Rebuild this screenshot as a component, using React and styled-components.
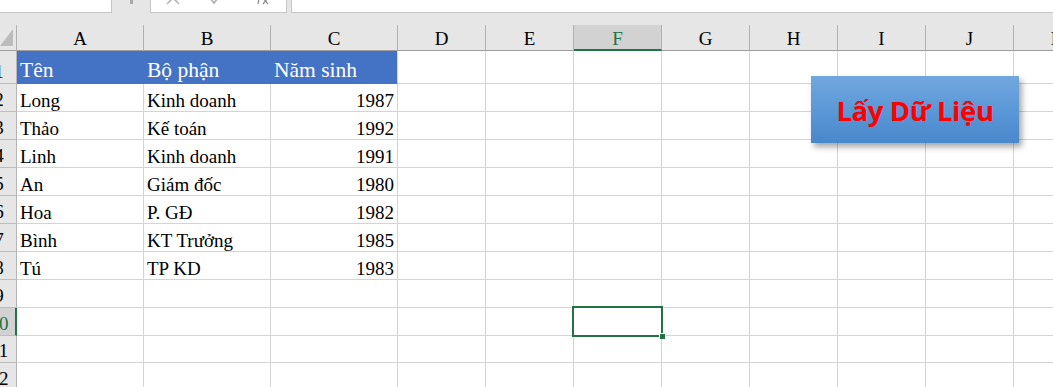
import React from 'react';
import styled, { createGlobalStyle } from 'styled-components';

const GlobalStyle = createGlobalStyle`
  html, body {
    margin: 0;
    padding: 0;
    background: #ffffff;
    overflow: hidden;
  }
  body {
    font-family: "Liberation Serif", "Times New Roman", serif;
  }
`;

const GREEN = '#217346';
const GRID = '#d4d4d4';
const HEAD_BG = '#e6e6e6';
const HEAD_SEL = '#d2d2d2';

const Sheet = styled.div`
  position: relative;
  width: 1053px;
  height: 387px;
  overflow: hidden;
  background: #ffffff;
`;

const FormulaBar = styled.div`
  display: flex;
  height: 13px;
  background: ${HEAD_BG};
`;

const NameBox = styled.div`
  width: 112px;
  height: 13px;
  box-sizing: border-box;
  background: #fff;
  border-right: 1px solid #c6c6c6;
  border-bottom: 1px solid #c6c6c6;
  overflow: hidden;
  font-size: 15px;
  line-height: 15px;
  padding-left: 3px;
  color: #222;
`;

const NameText = styled.div`
  margin-top: -12px;
`;

const Grip = styled.div`
  width: 3px;
  height: 4px;
  margin-left: 18px;
  background: #a8a8a8;
`;

const ButtonsBox = styled.div`
  display: flex;
  align-items: flex-start;
  width: 137px;
  height: 13px;
  margin-left: 17px;
  box-sizing: border-box;
  background: #fff;
  border: 1px solid #c6c6c6;
  border-top: none;
  overflow: hidden;
`;

const BarIcon = styled.svg`
  flex: none;
  margin-left: ${p => p.$ml}px;
  margin-top: -9px;
`;

const FormulaInput = styled.div`
  flex: 1;
  height: 13px;
  margin-left: 4px;
  box-sizing: border-box;
  background: #fff;
  border-left: 1px solid #c6c6c6;
  border-bottom: 1px solid #c6c6c6;
`;

const Gap = styled.div`
  height: 12px;
  background: ${HEAD_BG};
`;

const Grid = styled.div`
  display: grid;
  grid-template-columns: 17px 127px 127px 127px repeat(8, 88px);
  grid-auto-rows: auto;
`;

const ColHead = styled.div`
  height: 26px;
  box-sizing: border-box;
  display: flex;
  align-items: flex-end;
  justify-content: center;
  padding-bottom: ${p => (p.$sel ? 1 : 2)}px;
  background: ${p => (p.$sel ? HEAD_SEL : HEAD_BG)};
  border-right: 1px solid #b1b1b1;
  border-bottom: ${p => (p.$sel ? `2px solid ${GREEN}` : '1px solid #9d9d9d')};
  font-size: 19px;
  line-height: 19px;
  color: ${p => (p.$sel ? GREEN : '#000')};
  overflow: hidden;
  white-space: nowrap;
`;

const Corner = styled.div`
  height: 26px;
  box-sizing: border-box;
  background: ${HEAD_BG};
  border-right: 1px solid #b1b1b1;
  border-bottom: 1px solid #9d9d9d;
`;

const RowHead = styled.div`
  height: ${p => p.$h}px;
  box-sizing: border-box;
  display: flex;
  align-items: flex-end;
  padding-bottom: 2px;
  background: ${p => (p.$sel ? HEAD_SEL : HEAD_BG)};
  border-right: ${p => (p.$sel ? `2px solid ${GREEN}` : '1px solid #b5b5b5')};
  border-bottom: 1px solid #bdbdbd;
  overflow: hidden;
  font-size: 19px;
  line-height: 19px;
  color: ${p => (p.$sel ? GREEN : '#000')};
`;

const RowNum = styled.span`
  flex: none;
  width: 40px;
  margin-left: -21px;
  text-align: center;
`;

const Cell = styled.div`
  position: relative;
  height: ${p => p.$h}px;
  box-sizing: border-box;
  display: flex;
  align-items: flex-end;
  justify-content: ${p => (p.$right ? 'flex-end' : 'flex-start')};
  padding: 0 3px ${p => (p.$head ? 2 : 1)}px 3px;
  background: ${p => (p.$head ? '#4472c4' : '#fff')};
  color: ${p => (p.$head ? '#fff' : '#000')};
  border-right: 1px solid ${p => (p.$head && !p.$last ? '#4472c4' : GRID)};
  border-bottom: 1px solid ${p => (p.$head ? '#4472c4' : GRID)};
  font-size: ${p => (p.$head ? 21.5 : 19)}px;
  line-height: ${p => (p.$head ? 21 : 19)}px;
  white-space: nowrap;
`;

const Selection = styled.div`
  position: absolute;
  left: -2px;
  top: -2px;
  right: -2px;
  bottom: -2px;
  border: 2px solid ${GREEN};
  pointer-events: none;
  z-index: 2;
`;

const FillHandle = styled.div`
  position: absolute;
  right: -4px;
  bottom: -4px;
  width: 5px;
  height: 5px;
  background: ${GREEN};
  border: 1px solid #fff;
  border-right: none;
  border-bottom: none;
`;

const MacroButton = styled.div`
  position: absolute;
  left: 811px;
  top: 76px;
  width: 208px;
  height: 67px;
  display: flex;
  align-items: center;
  justify-content: center;
  padding-top: 2px;
  box-sizing: border-box;
  background: linear-gradient(to bottom, #71a7de 0%, #5b98d8 50%, #4987cb 100%);
  box-shadow: 3px 4px 6px rgba(0, 0, 0, 0.35);
  color: #ff0000;
  font-family: "Open Sans", "Noto Sans", sans-serif;
  font-weight: 700;
  font-size: 27.5px;
  letter-spacing: -0.4px;
  white-space: nowrap;
  z-index: 3;
`;

const columns = ['A', 'B', 'C', 'D', 'E', 'F', 'G', 'H', 'I', 'J', 'K'];

const rows = [
  ['Tên', 'Bộ phận', 'Năm sinh'],
  ['Long', 'Kinh doanh', '1987'],
  ['Thảo', 'Kế toán', '1992'],
  ['Linh', 'Kinh doanh', '1991'],
  ['An', 'Giám đốc', '1980'],
  ['Hoa', 'P. GĐ', '1982'],
  ['Bình', 'KT Trưởng', '1985'],
  ['Tú', 'TP KD', '1983'],
  [],
  [],
  [],
  [],
];

const rowHeight = i => (i === 0 ? 33 : i === 10 ? 27 : 28);

const App = () => {
  return (
    <>
      <GlobalStyle />
      <Sheet>
        <FormulaBar>
          <NameBox>
            <NameText>10</NameText>
          </NameBox>
          <Grip />
          <ButtonsBox>
            <BarIcon $ml={14} width="16" height="14" viewBox="0 0 16 14">
              <path d="M2 1 L14 13 M14 1 L2 13" stroke="#b4b4b4" strokeWidth="1.6" fill="none" />
            </BarIcon>
            <BarIcon $ml={28} width="14" height="14" viewBox="0 0 14 14">
              <path d="M1 7 L5 12 L13 2" stroke="#b4b4b4" strokeWidth="1.8" fill="none" />
            </BarIcon>
            <BarIcon $ml={30} width="16" height="14" viewBox="0 0 16 14">
              <path d="M5 13 C6 8 6 4 9 2 M4 6 L9 6 M10 7 L15 13 M15 7 L10 13" stroke="#8a8a8a" strokeWidth="1.2" fill="none" />
            </BarIcon>
          </ButtonsBox>
          <FormulaInput />
        </FormulaBar>
        <Gap />
        <Grid>
          <Corner>
            <svg width="16" height="25" viewBox="0 0 16 25">
              <polygon points="13,4 13,21 0,21" fill="#bcbcbc" />
            </svg>
          </Corner>
          {columns.map(c => (
            <ColHead key={c} $sel={c === 'F'}>{c}</ColHead>
          ))}
          {rows.map((r, i) => {
            const h = rowHeight(i);
            const rowSel = i === 9;
            return (
              <React.Fragment key={i}>
                <RowHead $h={h} $sel={rowSel}>
                  <RowNum>{i + 1}</RowNum>
                </RowHead>
                {columns.map((c, j) => {
                  const head = i === 0 && j < 3;
                  return (
                    <Cell
                      key={c}
                      $h={h}
                      $head={head}
                      $last={j === 2}
                      $right={j === 2 && i > 0}
                    >
                      {j < 3 ? r[j] : null}
                      {rowSel && c === 'F' && (
                        <Selection>
                          <FillHandle />
                        </Selection>
                      )}
                    </Cell>
                  );
                })}
              </React.Fragment>
            );
          })}
        </Grid>
        <MacroButton>Lấy Dữ Liệu</MacroButton>
      </Sheet>
    </>
  );
};

export default App;
